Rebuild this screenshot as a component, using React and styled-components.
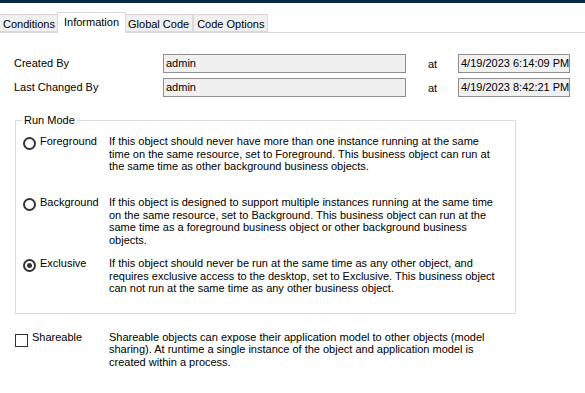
import React from 'react';
import styled, { createGlobalStyle } from 'styled-components';

const GlobalStyle = createGlobalStyle`
    body {
        margin: 0;
        background: #ffffff;
        font-family: "Liberation Sans", Arial, sans-serif;
        font-size: 11px;
        color: #000;
    }
`

const Page = styled.div`
    width: 585px;
    height: 393px;
    overflow: hidden;
    background: #fff;
`

const TopBar = styled.div`
    height: 3px;
    background: #0d2846;
`

const TabStrip = styled.div`
    display: flex;
    align-items: flex-end;
    margin-top: 9px;
    height: 20px;
    border-bottom: 1px solid #d9d9d9;
`

const Tab = styled.div`
    box-sizing: border-box;
    height: ${p => p.$active ? '21px' : '18px'};
    line-height: ${p => p.$active ? '19px' : '18px'};
    padding: 0 ${p => p.$active ? '6px' : '3px'};
    margin: 0 ${p => p.$active ? '-2px' : '0'} ${p => p.$active ? '-1px' : '0'};
    background: ${p => p.$active ? '#ffffff' : '#f0f0f0'};
    border: 1px solid #d9d9d9;
    border-bottom: ${p => p.$active ? 'none' : '1px solid #d9d9d9'};
    border-left-width: ${p => p.$first ? '0' : '1px'};
    position: relative;
    z-index: ${p => p.$active ? 1 : 0};
    white-space: nowrap;
`

const Meta = styled.div`
    display: grid;
    grid-template-columns: 149px 243px 52px 112px;
    grid-auto-rows: 19px;
    row-gap: 5px;
    align-items: center;
    margin: 21px 0 0 14px;
`

const Label = styled.div`
    line-height: 13px;
`

const AtLabel = styled.div`
    padding-left: 22px;
`

const ReadOnlyBox = styled.div`
    box-sizing: border-box;
    height: 19px;
    line-height: 17px;
    padding-left: 2px;
    background: #f0f0f0;
    border: 1px solid #8f8f8f;
    white-space: nowrap;
    overflow: hidden;
`

const GroupBox = styled.fieldset`
    box-sizing: border-box;
    width: 501px;
    margin: 17px 0 0 15px;
    padding: 8px 0 18px 0;
    border: 1px solid #dcdcdc;
    min-width: 0;

    legend {
        margin-left: 6px;
        padding: 0 2px;
        line-height: 13px;
    }
`

const OptionRow = styled.div`
    display: grid;
    grid-template-columns: ${p => p.$wide ? '94px' : '86px'} 1fr;
    height: ${p => p.$auto ? 'auto' : '61px'};
    padding-left: ${p => p.$wide ? '0' : '7px'};
    line-height: 12.5px;
`

const OptionLabel = styled.label`
    display: flex;
    align-items: flex-start;
    gap: 4px;
    white-space: nowrap;
`

const RadioCircle = styled.span`
    box-sizing: border-box;
    flex: none;
    width: 13px;
    height: 13px;
    margin-top: 2px;
    border: 2px solid #333;
    border-radius: 50%;
    display: flex;
    align-items: center;
    justify-content: center;

    &::after {
        content: '';
        width: 5px;
        height: 5px;
        border-radius: 50%;
        background: ${p => p.$checked ? '#333' : 'transparent'};
    }
`

const CheckSquare = styled.span`
    box-sizing: border-box;
    flex: none;
    width: 13px;
    height: 13px;
    margin-top: 3px;
    border: 1px solid #333;
    background: #fff;
`

const Description = styled.div`
    white-space: nowrap;
`

const ShareRow = styled(OptionRow)`
    margin: 17px 0 0 15px;
`

const modes = [
    {
        name: 'Foreground',
        lines: [
            'If this object should never have more than one instance running at the same',
            'time on the same resource, set to Foreground. This business object can run at',
            'the same time as other background business objects.',
        ],
    },
    {
        name: 'Background',
        lines: [
            'If this object is designed to support multiple instances running at the same time',
            'on the same resource, set to Background. This business object can run at the',
            'same time as a foreground business object or other background business',
            'objects.',
        ],
    },
    {
        name: 'Exclusive',
        checked: true,
        lines: [
            'If this object should never be run at the same time as any other object, and',
            'requires exclusive access to the desktop, set to Exclusive. This business object',
            'can not run at the same time as any other business object.',
        ],
    },
]

const Lines = ({ lines }) => (
    <Description>
        {lines.map((l, i) => <div key={i}>{l}</div>)}
    </Description>
)

export default function App() {
    return (
        <Page>
            <GlobalStyle />
            <TopBar />
            <TabStrip>
                <Tab $first>Conditions</Tab>
                <Tab $active>Information</Tab>
                <Tab>Global Code</Tab>
                <Tab>Code Options</Tab>
            </TabStrip>

            <Meta>
                <Label>Created By</Label>
                <ReadOnlyBox>admin</ReadOnlyBox>
                <AtLabel>at</AtLabel>
                <ReadOnlyBox>4/19/2023 6:14:09 PM</ReadOnlyBox>
                <Label>Last Changed By</Label>
                <ReadOnlyBox>admin</ReadOnlyBox>
                <AtLabel>at</AtLabel>
                <ReadOnlyBox>4/19/2023 8:42:21 PM</ReadOnlyBox>
            </Meta>

            <GroupBox>
                <legend>Run Mode</legend>
                {modes.map((m, i) => (
                    <OptionRow key={m.name} $auto={i === modes.length - 1}>
                        <OptionLabel>
                            <RadioCircle $checked={m.checked} />
                            {m.name}
                        </OptionLabel>
                        <Lines lines={m.lines} />
                    </OptionRow>
                ))}
            </GroupBox>

            <ShareRow $wide $auto>
                <OptionLabel>
                    <CheckSquare />
                    Shareable
                </OptionLabel>
                <Lines lines={[
                    'Shareable objects can expose their application model to other objects (model',
                    'sharing). At runtime a single instance of the object and application model is',
                    'created within a process.',
                ]} />
            </ShareRow>
        </Page>
    );
}
